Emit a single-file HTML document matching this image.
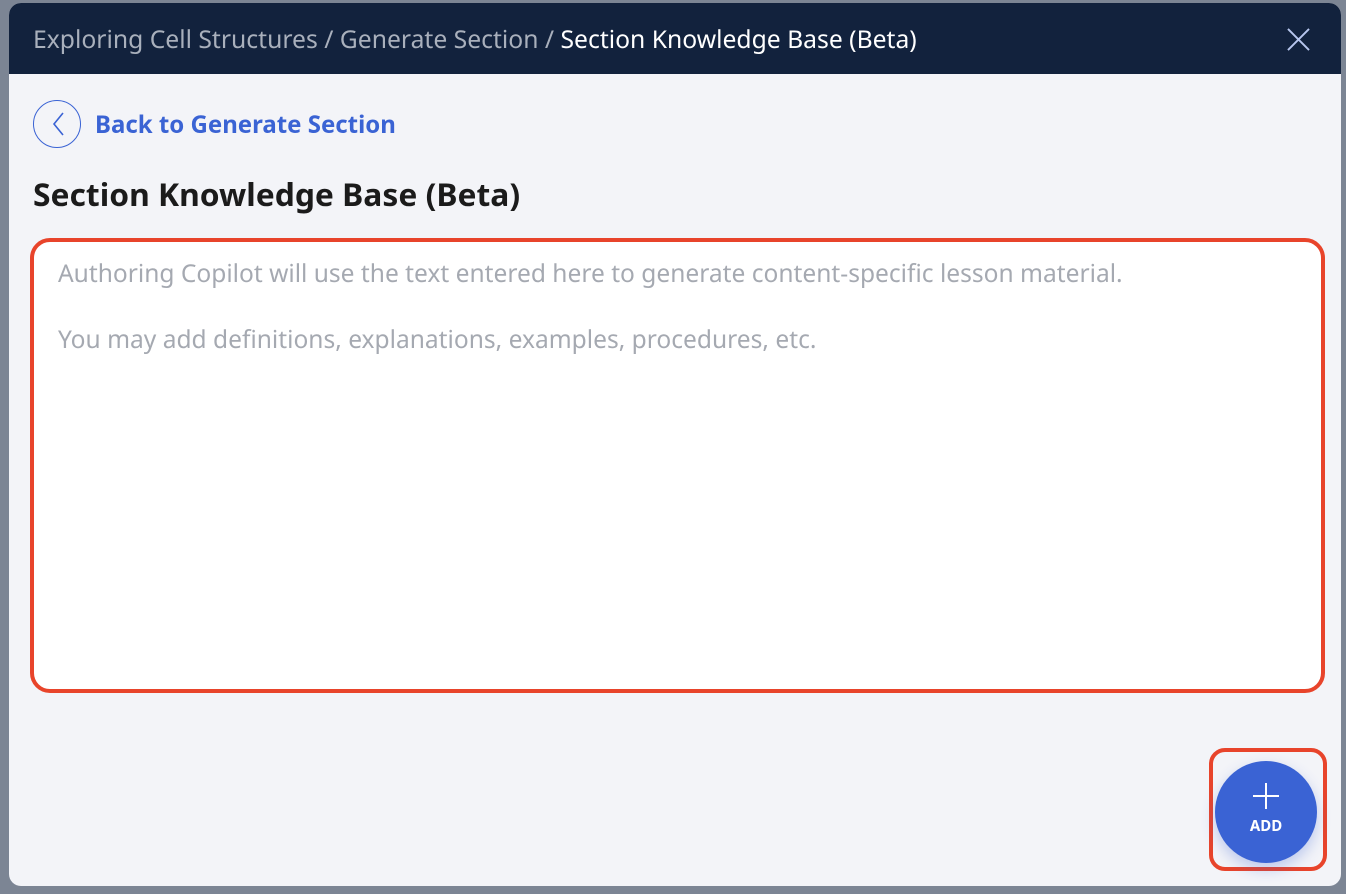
<!DOCTYPE html>
<html><head><style>
body{margin:0;width:1346px;height:894px;background:#7c8594;font-family:"Noto Sans","Liberation Sans",sans-serif;overflow:hidden;position:relative}
.modal{position:absolute;left:9px;top:3px;width:1332px;height:883px;background:#f3f4f8;border-radius:12px;overflow:hidden}
.hdr{height:71px;background:#12223d;position:relative}
.crumb{position:absolute;left:24px;top:20px;font-size:24.7px;color:#a9b0bc;white-space:nowrap}
.crumb b{font-weight:normal;color:#fff}
.back{position:absolute;left:24px;top:97px;display:flex;align-items:center}
.circ{width:48px;height:48px;border:1px solid #3a63d4;border-radius:50%;box-sizing:border-box}
.back span{margin-left:14px;color:#3a63d4;font-weight:bold;font-size:24px}
h1{position:absolute;left:24px;top:170px;margin:0;font-size:31.8px;color:#1b1b1b;font-weight:bold}
.box{position:absolute;left:21px;top:235px;width:1295px;height:455px;box-sizing:border-box;border:4px solid #e8442b;border-radius:20px;background:#fff}
.box p{margin:0;position:absolute;left:24px;font-size:24.55px;color:#a5a9b1;white-space:nowrap}
.rb{position:absolute;left:1200px;top:745px;width:118px;height:123px;box-sizing:border-box;border:4px solid #e8442b;border-radius:16px}
.fab{position:absolute;left:1206px;top:758px;width:102px;height:102px;border-radius:50%;background:#3a63d4;box-shadow:0 6px 14px rgba(58,99,212,.3);color:#fff;text-align:center}
.fab div{position:absolute;top:55px;width:100%;font-size:15px;font-weight:bold}
</style></head><body>
<div class="modal">
<div class="hdr"><div class="crumb">Exploring Cell Structures / Generate Section / <b>Section Knowledge Base (Beta)</b></div>
<svg style="position:absolute;left:1278px;top:25px" width="23" height="23" viewBox="0 0 24 24"><path d="M1 1L23 23M23 1L1 23" stroke="#b7c6ee" stroke-width="2"/></svg></div>
<div class="back"><div class="circ"><svg width="46" height="46" viewBox="0 0 46 46"><path d="M29 12L20 23L29 34" fill="none" stroke="#3a63d4" stroke-width="1.6"/></svg></div><span>Back to Generate Section</span></div>
<h1>Section Knowledge Base (Beta)</h1>
<div class="box"><p style="top:15px">Authoring Copilot will use the text entered here to generate content-specific lesson material.</p><p style="top:81px">You may add definitions, explanations, examples, procedures, etc.</p></div>
<div class="rb"></div>
<div class="fab"><svg style="position:absolute;left:38px;top:22px" width="26" height="26" viewBox="0 0 26 26"><path d="M13 0V26M0 13H26" stroke="#fff" stroke-width="2"/></svg><div>ADD</div></div>
</div>
</body></html>
